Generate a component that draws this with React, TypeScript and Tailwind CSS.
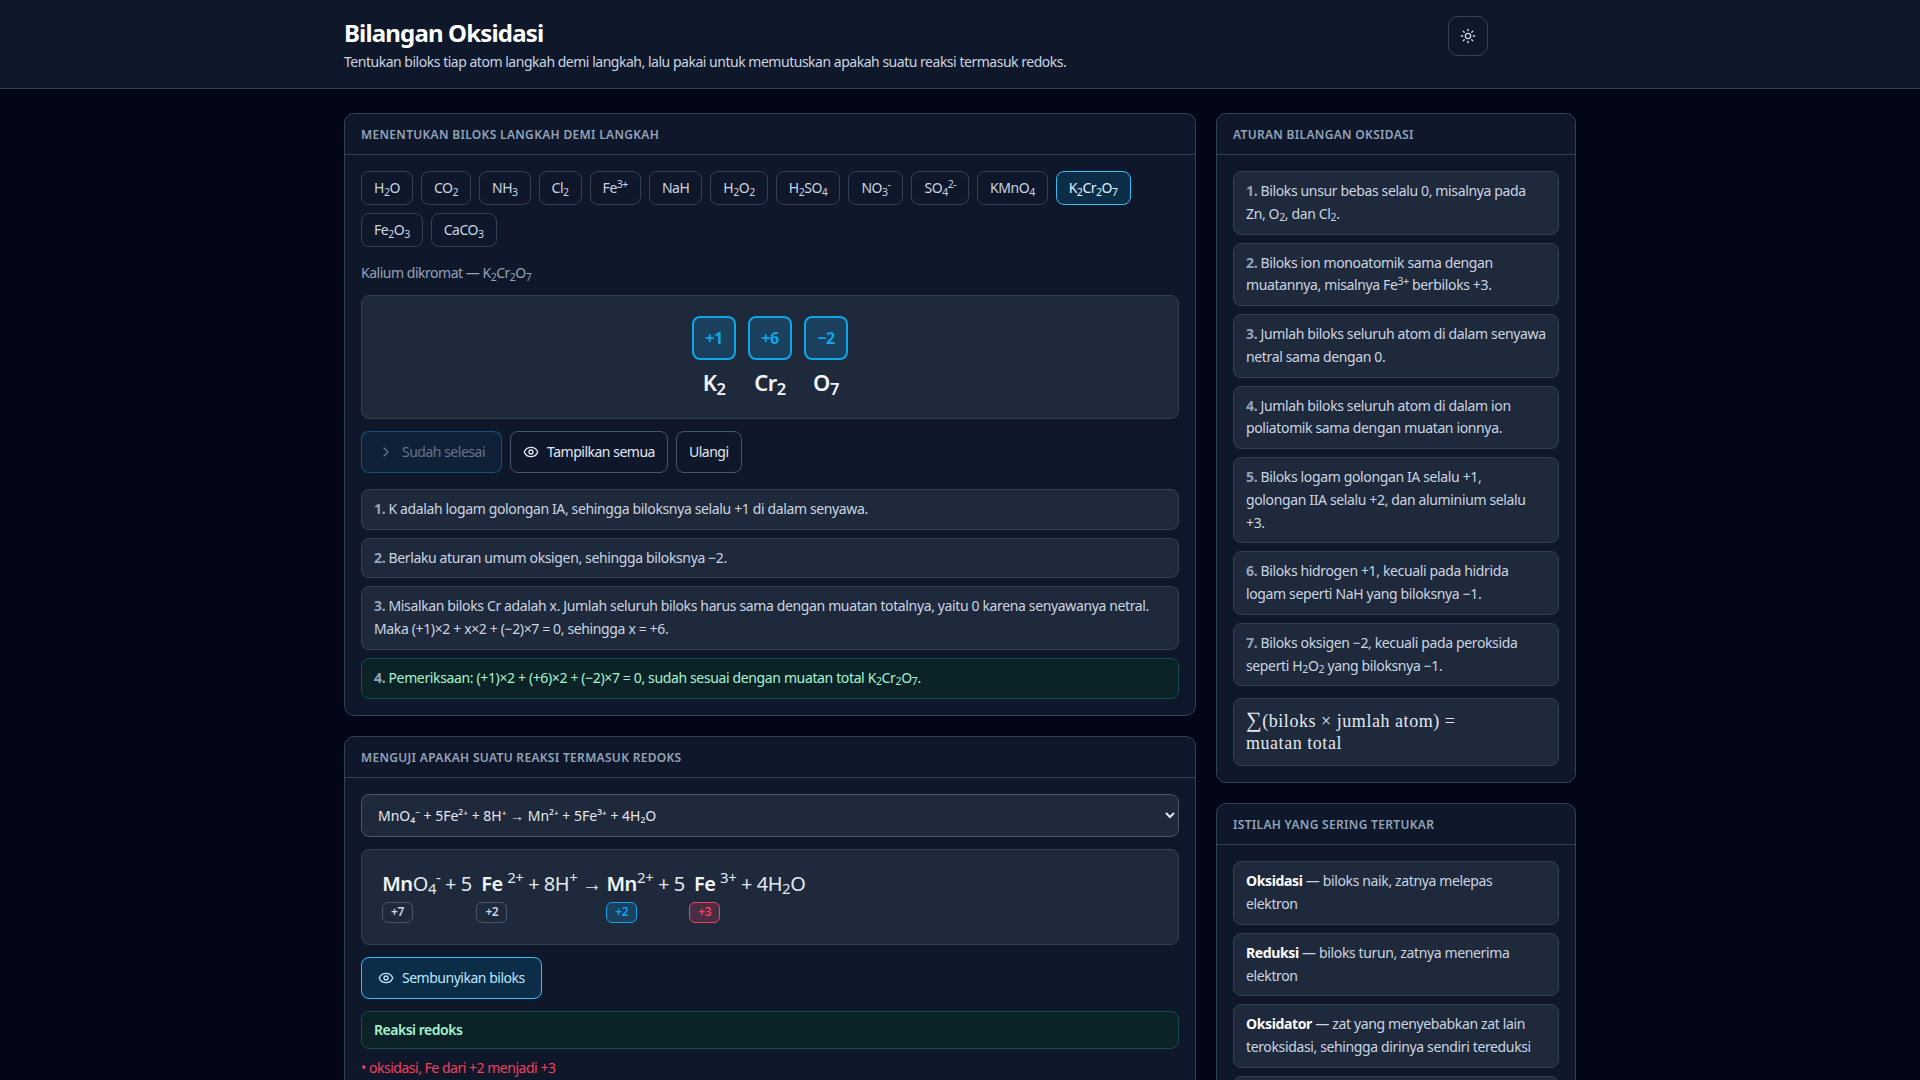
import { ChevronRight, Eye, Sun } from "lucide-react";
import type { ReactNode } from "react";

const chips: { id: string; label: ReactNode }[] = [
  { id: "h2o", label: <>H<sub>2</sub>O</> },
  { id: "co2", label: <>CO<sub>2</sub></> },
  { id: "nh3", label: <>NH<sub>3</sub></> },
  { id: "cl2", label: <>Cl<sub>2</sub></> },
  { id: "fe3", label: <>Fe<sup>3+</sup></> },
  { id: "nah", label: <>NaH</> },
  { id: "h2o2", label: <>H<sub>2</sub>O<sub>2</sub></> },
  { id: "h2so4", label: <>H<sub>2</sub>SO<sub>4</sub></> },
  { id: "no3", label: <>NO<sub>3</sub><sup>-</sup></> },
  { id: "so4", label: <>SO<sub>4</sub><sup>2-</sup></> },
  { id: "kmno4", label: <>KMnO<sub>4</sub></> },
  { id: "k2cr2o7", label: <>K<sub>2</sub>Cr<sub>2</sub>O<sub>7</sub></> },
  { id: "fe2o3", label: <>Fe<sub>2</sub>O<sub>3</sub></> },
  { id: "caco3", label: <>CaCO<sub>3</sub></> },
];

const atoms: { ox: string; el: string; n: string }[] = [
  { ox: "+1", el: "K", n: "2" },
  { ox: "+6", el: "Cr", n: "2" },
  { ox: "−2", el: "O", n: "7" },
];

const rules: ReactNode[] = [
  <>Biloks unsur bebas selalu 0, misalnya pada Zn, O<sub>2</sub>, dan Cl<sub>2</sub>.</>,
  <>Biloks ion monoatomik sama dengan muatannya, misalnya Fe<sup>3+</sup> berbiloks +3.</>,
  <>Jumlah biloks seluruh atom di dalam senyawa netral sama dengan 0.</>,
  <>Jumlah biloks seluruh atom di dalam ion poliatomik sama dengan muatan ionnya.</>,
  <>Biloks logam golongan IA selalu +1,<br />golongan IIA selalu +2, dan aluminium selalu<br />+3.</>,
  <>Biloks hidrogen +1, kecuali pada hidrida<br />logam seperti NaH yang biloksnya −1.</>,
  <>Biloks oksigen −2, kecuali pada peroksida seperti H<sub>2</sub>O<sub>2</sub> yang biloksnya −1.</>,
];

const terms = [
  { name: "Oksidasi", text: "biloks naik, zatnya melepas elektron" },
  { name: "Reduksi", text: "biloks turun, zatnya menerima elektron" },
  { name: "Oksidator", text: "zat yang menyebabkan zat lain teroksidasi, sehingga dirinya sendiri tereduksi" },
  { name: "Reduktor", text: "zat yang menyebabkan zat lain tereduksi, sehingga dirinya sendiri teroksidasi" },
];

const Card = ({ title, children }: { title: string; children: ReactNode }) => (
  <section className="rounded-[10px] border border-[#334155] bg-[#0f172a]">
    <h2 className="border-b border-[#334155] px-4 pt-[13px] pb-[11px] text-xs font-semibold tracking-[0.026em] text-[#94a3b8] uppercase">
      {title}
    </h2>
    <div className="p-4">{children}</div>
  </section>
);

const Box = ({ children, className = "" }: { children: ReactNode; className?: string }) => (
  <div className={`rounded-lg border border-[#334155] bg-[#1e293b] px-3 py-2 text-sm leading-relaxed tracking-[-0.026em] text-[#cbd5e1] ${className}`}>
    {children}
  </div>
);

const Atom = ({ el, ox, tone = "plain" }: { el: string; ox: string; tone?: "plain" | "blue" | "red" }) => {
  const toneClass =
    tone === "blue"
      ? "border-[#0ea5e9] bg-[#0ea5e9]/20 text-[#0ea5e9]"
      : tone === "red"
        ? "border-[#f43f5e] bg-[#f43f5e]/20 text-[#f43f5e]"
        : "border-[#475569] bg-transparent text-[#cbd5e1]";
  return (
    <span className="flex flex-col items-center">
      <span className="font-semibold text-[#f1f5f9]">{el}</span>
      <span className={`mt-1 flex h-[21px] items-center rounded-md border px-2 text-xs leading-none font-semibold ${toneClass}`}>
        {ox}
      </span>
    </span>
  );
};

export default function App() {
  return (
    <div className="min-h-screen bg-[#020617] font-['Noto_Sans',sans-serif] tracking-[-0.03em] text-[#e2e8f0]">
      <header className="h-[89px] border-b border-[#334155] bg-[#0f172a]">
        <div className="mx-auto max-w-7xl px-6">
          <div className="flex w-[1144px] items-start justify-between pt-4">
            <div>
              <h1 className="mt-px text-2xl font-bold tracking-[-0.035em] text-white">Bilangan Oksidasi</h1>
              <p className="mt-0.5 text-sm leading-relaxed text-[#cbd5e1]">
                Tentukan biloks tiap atom langkah demi langkah, lalu pakai untuk memutuskan apakah suatu reaksi termasuk redoks.
              </p>
            </div>
            <button className="flex h-10 w-10 items-center justify-center rounded-[10px] border border-[#334155] text-[#cbd5e1]">
              <Sun size={16} />
            </button>
          </div>
        </div>
      </header>

      <main className="mx-auto grid max-w-7xl grid-cols-[852px_360px] gap-5 px-6 pt-6 pb-8">
        <div className="flex flex-col gap-5">
          <Card title="Menentukan biloks langkah demi langkah">
            <div className="flex flex-wrap gap-2">
              {chips.map((chip) => (
                <button
                  key={chip.id}
                  className={
                    chip.id === "k2cr2o7"
                      ? "flex h-[34px] items-center rounded-lg border border-[#38bdf8] bg-[#0c2d48] px-3 text-sm text-[#e0f2fe]"
                      : "flex h-[34px] items-center rounded-lg border border-[#334155] px-3 text-sm text-[#cbd5e1]"
                  }
                >
                  <span>{chip.label}</span>
                </button>
              ))}
            </div>

            <p className="mt-[15px] mb-[10px] text-sm leading-relaxed text-[#94a3b8]">
              Kalium dikromat — K<sub>2</sub>Cr<sub>2</sub>O<sub>7</sub>
            </p>

            <div className="flex h-[124px] justify-center gap-3 rounded-lg border border-[#334155] bg-[#1e293b] pt-5">
              {atoms.map((atom) => (
                <div key={atom.el} className="flex w-11 flex-col items-center">
                  <div className="flex h-11 w-11 items-center justify-center rounded-lg border-2 border-[#0ea5e9] bg-[#0ea5e9]/20 text-base font-bold text-[#0ea5e9]">
                    {atom.ox}
                  </div>
                  <div className="mt-1.5 text-[22px] leading-8 font-semibold whitespace-nowrap text-[#f1f5f9]">
                    {atom.el}
                    <sub>{atom.n}</sub>
                  </div>
                </div>
              ))}
            </div>

            <div className="mt-3 flex gap-2 text-sm tracking-[-0.035em]">
              <button className="flex h-[42px] items-center gap-2 rounded-lg border border-[#0ea5e9]/40 bg-[#0ea5e9]/[0.07] px-4 text-[#64748b]">
                <ChevronRight size={16} />
                Sudah selesai
              </button>
              <button className="flex h-[42px] items-center gap-2 rounded-lg border border-[#475569] px-3 text-[#e2e8f0]">
                <Eye size={16} />
                Tampilkan semua
              </button>
              <button className="flex h-[42px] items-center rounded-lg border border-[#475569] px-3 text-[#e2e8f0]">
                Ulangi
              </button>
            </div>

            <div className="mt-4 flex flex-col gap-2">
              <Box>
                <b className="font-bold text-[#94a3b8]">1.</b> K adalah logam golongan IA, sehingga biloksnya selalu +1 di dalam senyawa.
              </Box>
              <Box>
                <b className="font-bold text-[#94a3b8]">2.</b> Berlaku aturan umum oksigen, sehingga biloksnya −2.
              </Box>
              <Box>
                <b className="font-bold text-[#94a3b8]">3.</b> Misalkan biloks Cr adalah x. Jumlah seluruh biloks harus sama dengan muatan totalnya, yaitu 0 karena senyawanya netral.
                <br />
                Maka (+1)×2 + x×2 + (−2)×7 = 0, sehingga x = +6.
              </Box>
              <div className="rounded-lg border border-[#134e4a] bg-[#0b2327] px-3 py-2 text-sm leading-relaxed tracking-[-0.026em] text-[#a7f3d0]">
                <b className="font-bold text-[#94a3b8]">4.</b> Pemeriksaan: (+1)×2 + (+6)×2 + (−2)×7 = 0, sudah sesuai dengan muatan total K<sub>2</sub>Cr<sub>2</sub>O<sub>7</sub>.
              </div>
            </div>
          </Card>

          <Card title="Menguji apakah suatu reaksi termasuk redoks">
            <select className="h-[43px] w-full rounded-lg border border-[#475569] bg-[#1e293b] px-3 text-sm tracking-normal text-[#e2e8f0]">
              <option>MnO₄⁻ + 5Fe²⁺ + 8H⁺ → Mn²⁺ + 5Fe³⁺ + 4H₂O</option>
              <option>2Na + Cl₂ → 2NaCl</option>
            </select>

            <div className="mt-3 flex h-[96px] items-start rounded-lg border border-[#334155] bg-[#1e293b] p-5 text-xl leading-7 whitespace-pre text-[#e2e8f0]">
              <Atom el="Mn" ox="+7" />
              <span>O<sub>4</sub><sup>-</sup> + 5 </span>
              <Atom el="Fe" ox="+2" />
              <span><sup>2+</sup> + 8H<sup>+</sup> → </span>
              <Atom el="Mn" ox="+2" tone="blue" />
              <span><sup>2+</sup> + 5 </span>
              <Atom el="Fe" ox="+3" tone="red" />
              <span><sup>3+</sup> + 4H<sub>2</sub>O</span>
            </div>

            <button className="mt-3 flex h-[42px] items-center gap-2 rounded-lg border border-[#38bdf8] bg-[#0c2d48] px-4 text-sm text-[#bae6fd]">
              <Eye size={16} />
              Sembunyikan biloks
            </button>

            <div className="mt-3 flex h-[38px] items-center rounded-lg border border-[#134e4a] bg-[#0b2327] px-3 text-sm font-semibold text-[#a7f3d0]">
              Reaksi redoks
            </div>

            <p className="mt-2 text-sm leading-relaxed text-[#f43f5e]">• oksidasi, Fe dari +2 menjadi +3</p>
            <p className="text-sm leading-relaxed text-[#0ea5e9]">• reduksi, Mn dari +7 menjadi +2</p>
          </Card>
        </div>

        <div className="flex flex-col gap-5">
          <Card title="Aturan bilangan oksidasi">
            <div className="flex flex-col gap-2">
              {rules.map((rule, i) => (
                <Box key={i}>
                  <b className="font-bold text-[#94a3b8]">{i + 1}.</b> {rule}
                </Box>
              ))}
            </div>
            <div className="mt-3 rounded-lg border border-[#334155] bg-[#1e293b] px-3 pt-[10px] pb-[11px] font-['Liberation_Serif',serif] text-[18px] leading-[22px] tracking-[0.03em] text-[#e2e8f0]">
              <span className="text-[22px]">∑</span>(biloks × jumlah atom) =<br />muatan total
            </div>
          </Card>

          <Card title="Istilah yang sering tertukar">
            <div className="flex flex-col gap-2">
              {terms.map((term) => (
                <Box key={term.name}>
                  <b className="font-bold text-white">{term.name}</b> — {term.text}
                </Box>
              ))}
            </div>
          </Card>
        </div>
      </main>
    </div>
  );
}
